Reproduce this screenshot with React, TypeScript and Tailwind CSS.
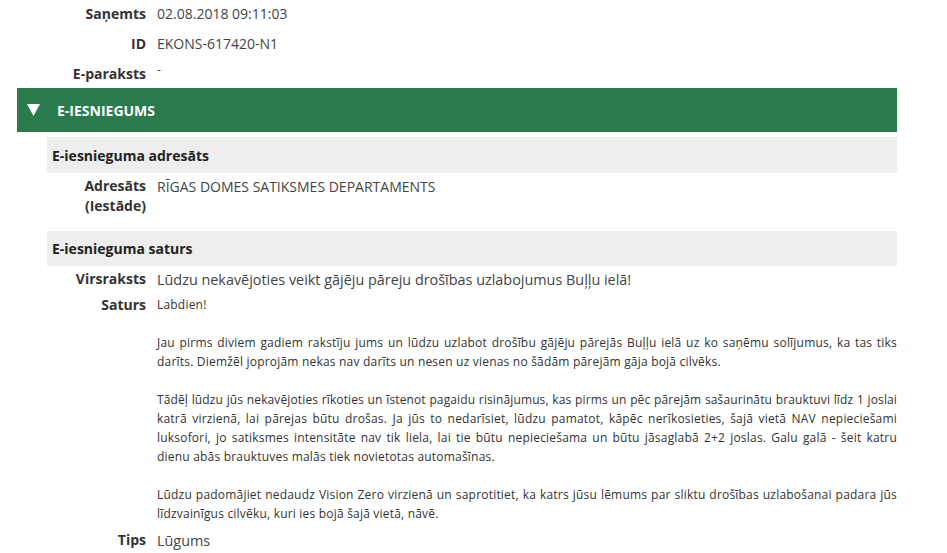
const TopRow = ({
  label,
  children,
  className = 'h-[30px]',
}: {
  label: string
  children: React.ReactNode
  className?: string
}) => (
  <div className={`flex pt-1 leading-5 ${className}`}>
    <div className="w-[146px] text-right font-bold text-[14px] text-[#333]">{label}</div>
    <div className="pl-[11px] text-[14px] text-[#444]">{children}</div>
  </div>
)

const Row = ({
  label,
  children,
  className = '',
}: {
  label: React.ReactNode
  children: React.ReactNode
  className?: string
}) => (
  <div className={`flex leading-5 ${className}`}>
    <div className="w-[99px] shrink-0 text-right font-bold text-[14px] text-[#333]">{label}</div>
    <div className="min-w-0 flex-1 pl-[11px] text-[#444]">{children}</div>
  </div>
)

const SectionHeader = ({ title, className = '' }: { title: string; className?: string }) => (
  <div className={`flex items-center bg-[#eeeeee] px-[5px] font-bold text-[14px] text-[#222] ${className}`}>
    {title}
  </div>
)

export default function App() {
  return (
    <div className="min-h-[553px] w-[947px] bg-white font-['Open_Sans','Noto_Sans',sans-serif] text-[#333]">
      <TopRow label="Saņemts">02.08.2018 09:11:03</TopRow>
      <TopRow label="ID">EKONS-617420-N1</TopRow>
      <TopRow label="E-paraksts" className="h-[28px]">
        <span className="relative -top-[5px] text-[12px]">-</span>
      </TopRow>

      <div className="ml-[17px] flex h-[44px] w-[880px] items-center bg-[#2a7a4e] text-white">
        <svg width="13" height="12" viewBox="0 0 13 12" className="ml-[10px]">
          <path d="M0 0 H13 L6.5 12 Z" fill="white" />
        </svg>
        <span className="ml-[17px] font-bold text-[14px] uppercase">E-iesniegums</span>
      </div>

      <div className="ml-[47px] mt-[5px] w-[850px]">
        <SectionHeader title="E-iesnieguma adresāts" className="h-[36px]" />
        <Row label={<>Adresāts<br />(Iestāde)</>} className="pt-[3px]">
          <span className="text-[14px]">RĪGAS DOMES SATIKSMES DEPARTAMENTS</span>
        </Row>

        <SectionHeader title="E-iesnieguma saturs" className="mt-[15px] h-[35px]" />
        <Row label="Virsraksts" className="pt-[3px] pb-[2px]">
          <span className="text-[14.4px]">
            Lūdzu nekavējoties veikt gājēju pāreju drošības uzlabojumus Buļļu ielā!
          </span>
        </Row>
        <Row label="Saturs" className="pt-[3px]">
          <div className="text-justify text-[12px] leading-[19px] tracking-[0.2px] text-[#333]">
            Labdien!
            <br />
            <br />
            Jau pirms diviem gadiem rakstīju jums un lūdzu uzlabot drošību gājēju pārejās Buļļu ielā uz ko
            saņēmu solījumus, ka tas tiks darīts. Diemžēl joprojām nekas nav darīts un nesen uz vienas no
            šādām pārejām gāja bojā cilvēks.
            <br />
            <br />
            <span className="tracking-[0.12px]">
              Tādēļ lūdzu jūs nekavējoties rīkoties un īstenot pagaidu risinājumus, kas pirms un pēc pārejām
              sašaurinātu brauktuvi līdz 1 joslai
            </span>{' '}
            katrā virzienā, lai pārejas būtu drošas. Ja jūs to nedarīsiet, lūdzu pamatot, kāpēc
            nerīkosieties, šajā vietā NAV nepieciešami luksofori, jo satiksmes intensitāte nav tik liela, lai
            tie būtu nepieciešama un būtu jāsaglabā 2+2 joslas. Galu galā - šeit katru dienu abās brauktuves
            malās tiek novietotas automašīnas.
            <br />
            <br />
            Lūdzu padomājiet nedaudz Vision Zero virzienā un saprotitiet, ka katrs jūsu lēmums par sliktu
            drošības uzlabošanai padara jūs līdzvainīgus cilvēku, kuri ies bojā šajā vietā, nāvē.
          </div>
        </Row>
        <Row label="Tips" className="pt-[7px]">
          <span className="text-[14.4px]">Lūgums</span>
        </Row>
      </div>
    </div>
  )
}
